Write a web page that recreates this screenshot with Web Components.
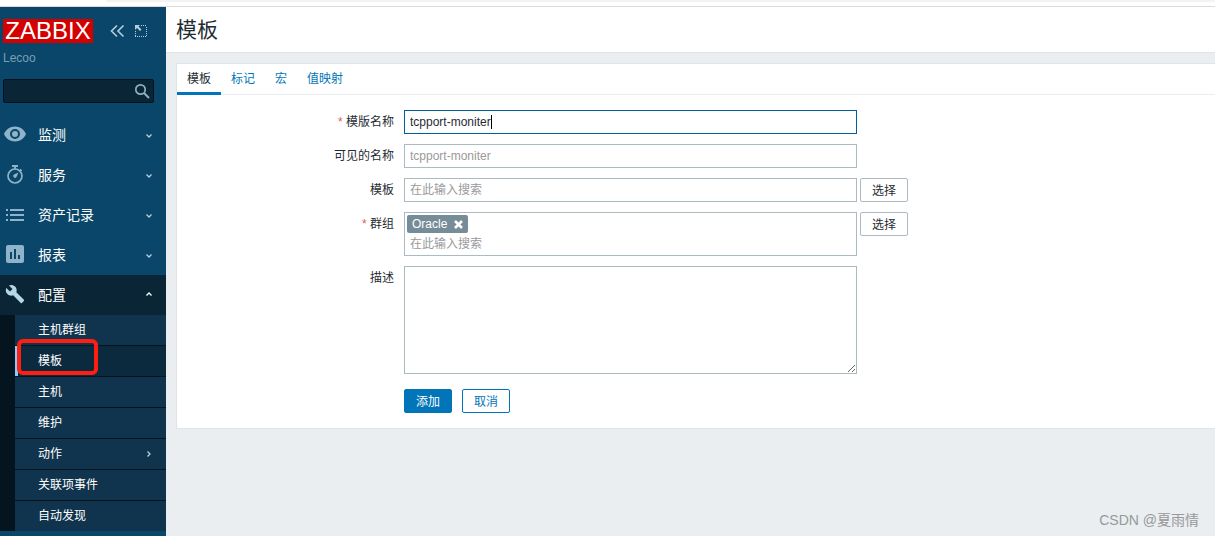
<!DOCTYPE html>
<html lang="zh-CN">
<head>
<meta charset="utf-8">
<meta name="viewport" content="width=device-width, initial-scale=1">
<title>模板</title>
<style>
  body {
    margin: 0;
    font: 12px/18px "Liberation Sans", "Noto Sans CJK SC", sans-serif;
    color: #1f2c33;
    background: #ebeef0;
  }
</style>
</head>
<body>
<zbx-app></zbx-app>

<template id="zbx-app">
  <style>
    :host { display: flex; flex-direction: column; min-height: 100vh; position: relative; }
    .edge { height: 6px; background: #fff; border-bottom: 1px solid #d9dbdd; }
    .edge div { height: 2px; margin-left: 106px; background: #f1f3f4; border-bottom-left-radius: 6px; }
    .body { flex: 1; display: flex; }
    main { flex: 1; min-width: 0; }
    .panel { margin: 10px 0 0 10px; background: #fff; border: 1px solid #dfe4e7; border-right: 0; }
    .watermark { position: absolute; right: 16px; bottom: 6px; font-size: 14px; line-height: 20px; color: #96999c; }
  </style>
  <div class="edge"><div></div></div>
  <div class="body">
    <side-bar></side-bar>
    <main>
      <page-header>模板</page-header>
      <div class="panel">
        <tab-bar>
          <tab-link active>模板</tab-link>
          <tab-link>标记</tab-link>
          <tab-link>宏</tab-link>
          <tab-link>值映射</tab-link>
        </tab-bar>
        <template-form></template-form>
      </div>
    </main>
  </div>
  <div class="watermark">CSDN @夏雨情</div>
</template>

<template id="side-bar">
  <style>
    :host { display: block; flex: none; width: 166px; background: #0a466a; }
    .head { display: flex; align-items: center; padding: 12px 17px 0 3px; }
    .logo { width: 91px; height: 24px; background: #d40000; color: #fff; font-size: 24px; line-height: 24px; text-align: center; text-decoration: none; }
    .head button { border: 0; padding: 0; background: none; color: #b6cedb; width: 16px; height: 16px; }
    .head .collapse { margin: 0 8px 0 16px; }
    svg { display: block; }
    .server { padding: 6px 3px 0; color: #7a9fb5; }
    .search { display: flex; align-items: center; box-sizing: border-box; height: 24px; margin: 12px 12px 12px 3px; background: #0a2636; border: 1px solid #04131c; border-radius: 2px; }
    .search input { flex: 1; min-width: 0; height: 22px; border: 0; padding: 0 6px; background: none; color: #fff; font: inherit; outline: 0; }
    .search button { border: 0; padding: 0 3px; background: none; color: #8fafc1; }
    .sub { padding-left: 15px; background: #04151f; }
  </style>
  <div class="head">
    <a class="logo" href="#">ZABBIX</a>
    <button class="collapse" aria-label="折叠"><svg width="16" height="16" fill="none" stroke="currentColor" stroke-width="1.6"><path d="M8 2.500 2.500 8 8 13.500M14.500 2.500 9 8l5.500 5.500"/></svg></button>
    <button aria-label="隐藏"><svg width="16" height="16" fill="currentColor"><path d="M2 2h5L5.500 3.500 8.500 6.500 7 8 4 5 2 7z"/><path d="M8 2.500h6M13.500 4v10M2.500 8v6M2 13.500h12" fill="none" stroke="currentColor" stroke-dasharray="1 1"/></svg></button>
  </div>
  <div class="server">Lecoo</div>
  <div class="search">
    <input type="text" aria-label="搜索">
    <button aria-label="搜索"><svg width="16" height="16" fill="none" stroke="currentColor"><circle cx="6.500" cy="6.500" r="4.700" stroke-width="1.700"/><path d="m10 10 5 5" stroke-width="2"/></svg></button>
  </div>
  <nav>
    <nav-item icon="eye">监测</nav-item>
    <nav-item icon="timer">服务</nav-item>
    <nav-item icon="list">资产记录</nav-item>
    <nav-item icon="report">报表</nav-item>
    <nav-item icon="wrench" open>配置</nav-item>
    <div class="sub">
      <sub-item>主机群组</sub-item>
      <sub-item current>模板</sub-item>
      <sub-item>主机</sub-item>
      <sub-item>维护</sub-item>
      <sub-item more>动作</sub-item>
      <sub-item>关联项事件</sub-item>
      <sub-item last>自动发现</sub-item>
    </div>
  </nav>
</template>

<template id="nav-item">
  <style>
    :host { display: block; --icon: #8fb3c8; }
    :host([open]) { background: #0a2636; --icon: #b6d6ea; }
    a { display: flex; align-items: center; height: 40px; padding: 0 13px 0 3px; gap: 11px; color: #fff; font-size: 14px; line-height: 20px; text-decoration: none; }
    svg { display: block; flex: none; }
    .icon { display: flex; justify-content: center; width: 24px; color: var(--icon); padding-bottom: 2px; }
    .text { flex: 1; }
    .arrow { color: #b6cedb; }
    :host([open]) .arrow { transform: rotate(180deg); color: #fff; }
  </style>
  <a href="#">
    <span class="icon"></span>
    <span class="text"><slot></slot></span>
    <svg class="arrow" width="8" height="8" fill="none" stroke="currentColor" stroke-width="1.300"><path d="m1.500 3.500 2.500 2.500 2.500-2.500"/></svg>
  </a>
</template>

<template id="sub-item">
  <style>
    :host { display: block; background: #10344d; border-bottom: 1px solid #04151f; }
    :host([current]) { background: #0b2a3e; }
    :host([last]) { border-bottom: 0; }
    a { display: flex; align-items: center; height: 30px; padding: 0 13px 0 20px; border-left: 3px solid transparent; color: #fff; text-decoration: none; position: relative; }
    :host([current]) a { border-left-color: #88ccff; }
    .text { flex: 1; }
    svg { display: none; color: #b6cedb; }
    :host([more]) svg { display: block; }
    .mark { display: none; }
    /* hand-drawn highlight lying over the current entry */
    :host([current]) .mark { display: block; position: absolute; box-sizing: border-box; left: -1px; top: -7px; width: 81px; height: 36px; border: 4px solid #ff1e12; border-radius: 6px; }
  </style>
  <a href="#"><span class="text"><slot></slot></span><svg width="8" height="8" fill="none" stroke="currentColor" stroke-width="1.300"><path d="m2.500 1.500 2.500 2.500-2.500 2.500"/></svg><span class="mark"></span></a>
</template>

<template id="page-header">
  <style>
    :host { display: block; background: #fff; border-bottom: 1px solid #dfe4e7; }
    h1 { margin: 0; padding: 8px 10px; font-size: 21px; line-height: 29px; font-weight: 400; }
  </style>
  <h1><slot></slot></h1>
</template>

<template id="tab-bar">
  <style>
    :host { display: block; border-bottom: 1px solid #ebeef0; }
    nav { display: flex; margin-bottom: -1px; }
  </style>
  <nav><slot></slot></nav>
</template>

<template id="tab-link">
  <style>
    :host { display: block; }
    a { display: block; padding: 6px 10px 4px; line-height: 18px; border-bottom: 3px solid transparent; color: #0275b8; text-decoration: none; }
    :host([active]) a { color: #1f2c33; border-bottom-color: #0275b8; }
  </style>
  <a href="#"><slot></slot></a>
</template>

<template id="form-row">
  <style>
    :host { display: grid; grid-template-columns: 217px minmax(0, 1fr); column-gap: 10px; }
    .label { text-align: right; line-height: 24px; }
    :host([required]) .label::before { content: "* "; color: #e45959; }
    .field { display: flex; align-items: flex-start; gap: 3px; }
  </style>
  <div class="label"><slot name="label"></slot></div>
  <div class="field"><slot></slot></div>
</template>

<template id="template-form">
  <style>
    :host { display: block; }
    form { display: flex; flex-direction: column; gap: 10px; padding: 15px 0; }
    input, textarea { box-sizing: border-box; width: 453px; margin: 0; padding: 0 5px; border: 1px solid #acbbc2; border-radius: 0; background: #fff; color: #1f2c33; font: inherit; outline: 0; }
    input { height: 24px; }
    input:focus { border-color: #00609a; }
    ::placeholder { color: #9a9a9a; opacity: 1; }
    textarea { display: block; height: 108px; resize: both; }
    button { box-sizing: border-box; min-width: 48px; height: 24px; padding: 1px 11px 0; border: 1px solid #acbbc2; border-radius: 2px; background: #fff; color: #1f2c33; font: inherit; line-height: 20px; }
    .actions { padding-top: 5px; }
    .actions button { border-color: #0275b8; color: #0275b8; }
    .actions .primary { margin-right: 7px; background: #0275b8; color: #fff; }
    .multi { box-sizing: border-box; width: 453px; padding: 2px; border: 1px solid #acbbc2; }
    .multi input { display: block; width: 100%; height: 20px; padding: 1px 3px 0; border: 0; }
    .caret-box { position: relative; display: flex; }
    /* text cursor after the typed name */
    .caret-box::after { content: ""; position: absolute; left: 87px; top: 5px; width: 1px; height: 14px; background: #000; }
    .caret-box input { caret-color: transparent; }
  </style>
  <form>
    <form-row required><label slot="label" for="name">模版名称</label><div class="caret-box"><input id="name" type="text" value="tcpport-moniter"></div></form-row>
    <form-row><label slot="label" for="visible">可见的名称</label><input id="visible" type="text" placeholder="tcpport-moniter"></form-row>
    <form-row><label slot="label" for="templates">模板</label><input id="templates" type="text" placeholder="在此输入搜索"><button type="button">选择</button></form-row>
    <form-row required><label slot="label" for="groups">群组</label>
      <div class="multi"><group-tag>Oracle</group-tag><input id="groups" type="text" placeholder="在此输入搜索"></div><button type="button">选择</button></form-row>
    <form-row><label slot="label" for="description">描述</label><textarea id="description"></textarea></form-row>
    <form-row class="actions"><button class="primary" type="button">添加</button><button type="button">取消</button></form-row>
  </form>
</template>

<template id="group-tag">
  <style>
    :host { display: flex; width: fit-content; align-items: center; height: 18px; padding: 0 5px; gap: 7px; border-radius: 2px; background: #768d99; color: #fff; }
    button { border: 0; padding: 0; background: none; color: inherit; }
    svg { display: block; }
  </style>
  <span><slot></slot></span>
  <button type="button" aria-label="移除"><svg width="9" height="9" fill="none" stroke="currentColor" stroke-width="2.600"><path d="m1 1 7 7M8 1 1 8"/></svg></button>
</template>

<script>
  const icons = {
    eye: '<svg width="24" height="24" viewBox="0 0 24 24" fill="currentColor"><path d="M12 4.500C7 4.500 2.730 7.610 1 12c1.730 4.390 6 7.500 11 7.500s9.270-3.110 11-7.500c-1.730-4.390-6-7.500-11-7.500zM12 17a5 5 0 1 1 0-10 5 5 0 0 1 0 10zm0-8a3 3 0 1 0 0 6 3 3 0 0 0 0-6z"/></svg>',
    timer: '<svg width="24" height="24" viewBox="0 0 24 24" fill="none" stroke="currentColor"><circle cx="12" cy="14" r="7" stroke-width="1.700"/><path d="M9 4h6M12 4v3M17 7.500l1.500 1.500" stroke-width="1.800"/><path d="m15.500 10.500-2 4.500a1.800 1.800 0 1 1-2.500-2.500z" fill="currentColor" stroke="none"/></svg>',
    list: '<svg width="24" height="24" viewBox="0 0 24 24" fill="currentColor"><path d="M3 7h2v2H3zM7 7h14v2H7zM3 12h2v2H3zM7 12h14v2H7zM3 17h2v2H3zM7 17h14v2H7z"/></svg>',
    report: '<svg width="24" height="24" viewBox="0 0 24 24" fill="currentColor"><path d="M19 3H5a2 2 0 0 0-2 2v14c0 1.100.9 2 2 2h14a2 2 0 0 0 2-2V5a2 2 0 0 0-2-2zM9 17H7v-7h2v7zm4 0h-2V7h2v10zm4 0h-2v-4h2v4z"/></svg>',
    wrench: '<svg width="20" height="20" viewBox="0 0 24 24" fill="currentColor"><path d="M22.700 19l-9.100-9.100c.9-2.300.4-5-1.500-6.900-2-2-5-2.400-7.400-1.300L9 6 6 9 1.600 4.700C.4 7.100.9 10.100 2.900 12.100c1.900 1.900 4.600 2.400 6.900 1.500l9.100 9.100c.4.4 1 .4 1.400 0l2.300-2.300c.5-.4.5-1.100.1-1.400z"/></svg>'
  };

  class Base extends HTMLElement {
    constructor() {
      super();
      const source = document.getElementById(this.localName);
      this.attachShadow({ mode: 'open' }).append(document.importNode(source.content, true));
    }
  }
  class NavItem extends Base {
    connectedCallback() {
      this.shadowRoot.querySelector('.icon').innerHTML = icons[this.getAttribute('icon')] || '';
    }
  }
  class TemplateForm extends Base {
    connectedCallback() {
      const name = this.shadowRoot.getElementById('name');
      name.focus({ preventScroll: true });
      name.setSelectionRange(name.value.length, name.value.length);
    }
  }
  customElements.define('group-tag', class extends Base {});
  customElements.define('form-row', class extends Base {});
  customElements.define('tab-link', class extends Base {});
  customElements.define('tab-bar', class extends Base {});
  customElements.define('page-header', class extends Base {});
  customElements.define('sub-item', class extends Base {});
  customElements.define('nav-item', NavItem);
  customElements.define('side-bar', class extends Base {});
  customElements.define('template-form', TemplateForm);
  customElements.define('zbx-app', class extends Base {});
</script>
</body>
</html>
